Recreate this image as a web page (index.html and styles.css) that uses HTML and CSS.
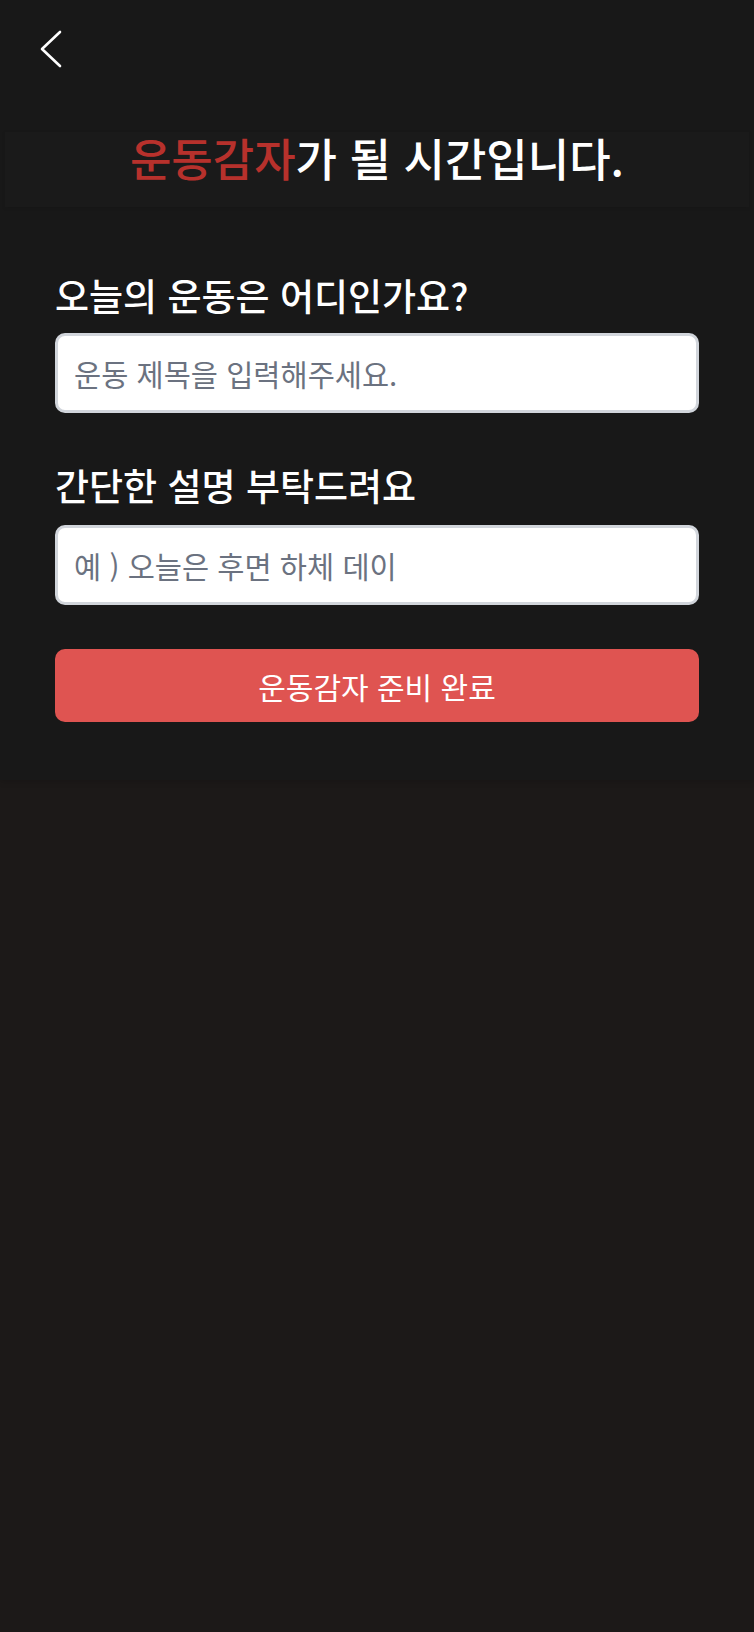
FILE: index.html
```html
<!DOCTYPE html>
<html lang="ko">
<head>
  <meta charset="UTF-8" />
  <title>운동감자</title>
  <link rel="stylesheet" href="styles.css">
</head>
<body>

  <div class="page">
    <div class="top-bar">
      <button class="back-btn" type="button" aria-label="뒤로가기">
        <svg width="22" height="38" viewBox="0 0 22 38" fill="none">
          <path d="M20 2 L2 19 L20 36" stroke="#ffffff" stroke-width="2.6" stroke-linecap="round" stroke-linejoin="round" />
        </svg>
      </button>
    </div>

    <div class="title-box">
      <h1><span class="accent">운동감자</span>가 될 시간입니다.</h1>
    </div>

    <form id="workout-form">
      <div class="form-field">
        <label for="title">오늘의 운동은 어디인가요?</label>
        <input type="text" id="title" placeholder="운동 제목을 입력해주세요." />
      </div>

      <div class="form-field">
        <label for="desc">간단한 설명 부탁드려요</label>
        <input type="text" id="desc" placeholder="예 ) 오늘은 후면 하체 데이" />
      </div>

      <button type="submit" class="submit-btn">운동감자 준비 완료</button>
    </form>
  </div>

</body>
</html>
```

FILE: styles.css
```css
body {
  font-family: "Noto Sans CJK KR", "Noto Sans", sans-serif;
  background: #1c1918;
  margin: 0;
  padding: 0;
  min-height: 100vh;
}

.page {
  background: #181818;
  padding-bottom: 58px;
  box-shadow: 0 2px 6px rgba(0, 0, 0, 0.15);
}

.top-bar {
  padding: 30px 0 0 40px;
  height: 38px;
}

.back-btn {
  background: none;
  border: none;
  padding: 0;
  margin: 0;
  display: block;
  cursor: pointer;
}

.back-btn svg {
  display: block;
}

.title-box {
  margin: 64px 5px 0;
  padding-bottom: 23px;
  background: #1a1a1a;
  box-shadow: 0 1px 4px rgba(0, 0, 0, 0.08);
}

h1 {
  margin: 0;
  text-align: center;
  font-size: 45px;
  line-height: 52px;
  font-weight: 500;
  color: #ffffff;
}

.accent {
  color: #b7312c;
}

form {
  padding: 68px 55px 0;
  display: flex;
  flex-direction: column;
}

.form-field {
  display: flex;
  flex-direction: column;
  gap: 18px;
  margin-bottom: 52px;
}

.form-field:nth-child(2) {
  gap: 20px;
  margin-bottom: 44px;
}

.form-field label {
  font-size: 37px;
  line-height: 40px;
  font-weight: 500;
  color: #ffffff;
}

.form-field input {
  box-sizing: border-box;
  width: 100%;
  height: 80px;
  padding: 0 16px;
  border: 3px solid #d1d5db;
  border-radius: 10px;
  background: #ffffff;
  font-family: inherit;
  font-size: 29.5px;
  color: #111827;
  outline: none;
}

.form-field input::placeholder {
  color: #6b7280;
}

.submit-btn {
  height: 73px;
  border: none;
  border-radius: 10px;
  background-color: #df5451;
  color: #ffffff;
  font-family: inherit;
  font-size: 30px;
  cursor: pointer;
}
```
